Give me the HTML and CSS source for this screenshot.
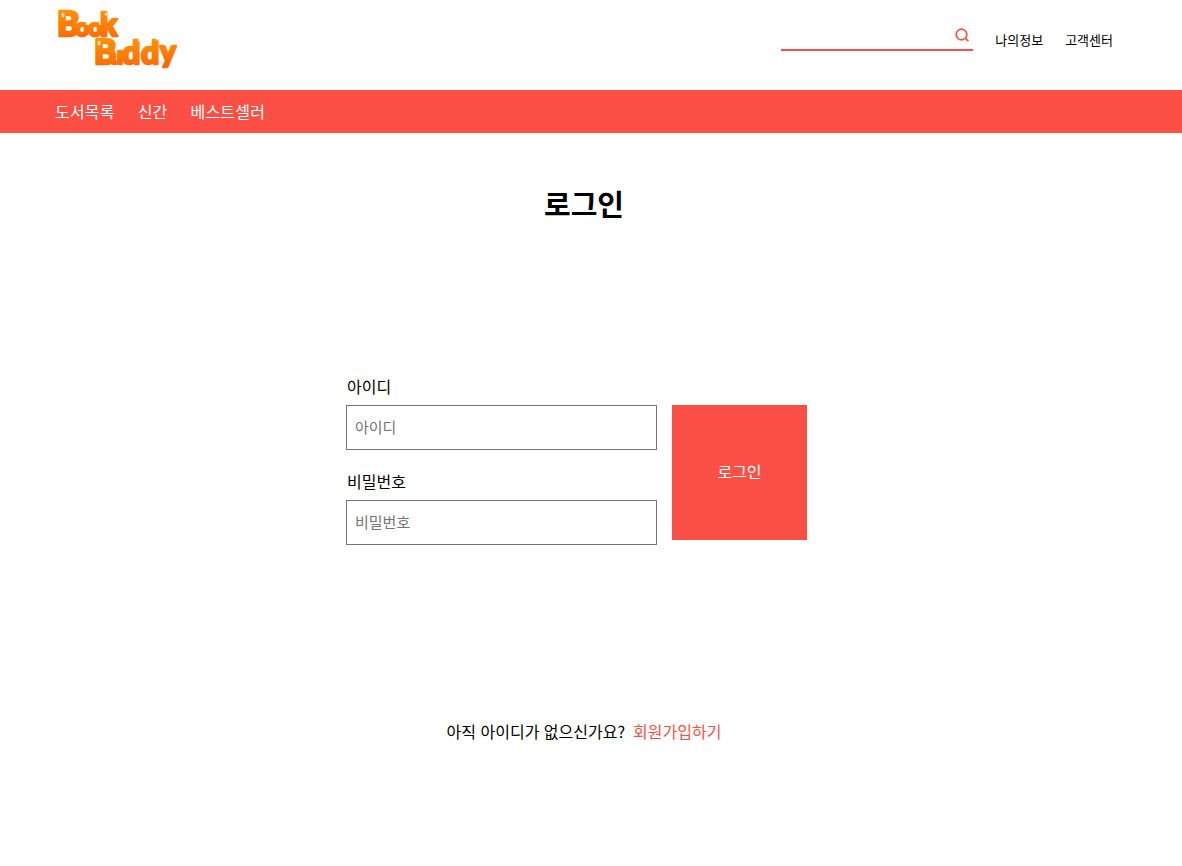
FILE: index.html
```html
<!DOCTYPE html>
<html lang="ko">
<head>
  <meta charset="UTF-8">
  <title>Book Buddy - 로그인</title>
  <link rel="stylesheet" href="styles.css">
</head>
<body>
  <header class="top">
    <a class="logo" href="#">
      <svg width="126" height="60" viewBox="0 0 126 60" xmlns="http://www.w3.org/2000/svg">
        <defs>
          <linearGradient id="logo-fill" x1="0" y1="0" x2="0" y2="1">
            <stop offset="0" stop-color="#ff9d0a"/>
            <stop offset="1" stop-color="#ff6400"/>
          </linearGradient>
        </defs>
        <g class="logo-text" fill="url(#logo-fill)" stroke="url(#logo-fill)">
          <text x="1" y="27" class="logo-cap">B</text>
          <text x="19" y="27">o</text>
          <text x="32" y="27">o</text>
          <text x="44" y="27" class="logo-tall">k</text>
          <text x="38" y="55" class="logo-cap">B</text>
          <text x="53" y="55">u</text>
          <text x="66" y="55" class="logo-tall">d</text>
          <text x="85" y="55" class="logo-tall">d</text>
          <text x="104" y="53" class="logo-tail">y</text>
        </g>
        <g fill="#fff" opacity=".75">
          <ellipse cx="7" cy="6" rx="1.5" ry="2.5"/>
          <ellipse cx="31" cy="15" rx="1.2" ry="1"/>
          <ellipse cx="44" cy="15" rx="1.2" ry="1"/>
          <ellipse cx="50" cy="5" rx="1.2" ry="1.6"/>
          <ellipse cx="43" cy="34" rx="1.5" ry="2.5"/>
          <ellipse cx="83" cy="31" rx="1.2" ry="1.6"/>
          <ellipse cx="101" cy="30" rx="1.2" ry="1.6"/>
          <ellipse cx="120" cy="33" rx="1.2" ry="1.6"/>
        </g>
      </svg>
    </a>
    <div class="top-right">
      <form class="search">
        <input class="search-input" type="text">
        <svg class="search-icon" width="16" height="16" viewBox="0 0 16 16" fill="none" stroke="#fb4f45" stroke-width="1.7">
          <circle cx="7.5" cy="6.5" r="5.3"/>
          <path d="M11.4 10.4l3 2.8"/>
        </svg>
      </form>
      <a class="top-link" href="#">나의정보</a>
      <a class="top-link" href="#">고객센터</a>
    </div>
  </header>

  <nav class="menu">
    <a href="#">도서목록</a>
    <a href="#">신간</a>
    <a href="#">베스트셀러</a>
  </nav>

  <main class="content">
    <h1 class="title">로그인</h1>

    <form class="login">
      <div class="fields">
        <label class="field-label" for="user-id">아이디</label>
        <input class="field-input" id="user-id" type="text" placeholder="아이디">
        <label class="field-label field-label-next" for="user-pw">비밀번호</label>
        <input class="field-input" id="user-pw" type="password" placeholder="비밀번호">
      </div>
      <button class="login-btn" type="button">로그인</button>
    </form>

    <p class="join">아직 아이디가 없으신가요?<a href="#">회원가입하기</a></p>
  </main>
</body>
</html>
```

FILE: styles.css
```css
body {
  margin: 0;
  padding: 0;
  font-family: "Noto Sans CJK KR", "Noto Sans", sans-serif;
  font-size: 16px;
  background-color: #fff;
  color: #000;
}
a {
  color: inherit;
  text-decoration: none;
}

.top {
  height: 90px;
  padding: 0 69px 0 56px;
  display: flex;
  justify-content: space-between;
  align-items: flex-start;
}
.logo {
  display: block;
  margin-top: 9px;
}
.logo-text {
  font-family: "Lato", sans-serif;
  font-weight: 900;
  font-size: 25px;
  stroke-width: 2.4px;
  stroke-linejoin: round;
}
.logo-cap {
  font-size: 34px;
}
.logo-tall {
  font-size: 32px;
}
.logo-tail {
  font-size: 30px;
}
.top-right {
  display: flex;
  align-items: center;
  height: 79px;
  gap: 22px;
}
.search {
  width: 192px;
  height: 24px;
  border-bottom: 2px solid #fb4f45;
  position: relative;
  align-self: flex-end;
  margin-bottom: 28px;
}
.search-input {
  width: 100%;
  height: 100%;
  padding: 0;
  border: 0;
  outline: 0;
  background: none;
}
.search-icon {
  position: absolute;
  right: 3px;
  top: 3px;
}
.top-link {
  font-size: 13px;
  line-height: 18px;
}

.menu {
  height: 43px;
  padding: 0 55px 2px;
  box-sizing: border-box;
  display: flex;
  align-items: center;
  gap: 23px;
  background-color: #fb4f45;
  color: #fff;
  letter-spacing: .2px;
}

.content {
  padding: 50px 69px 0 55px;
}
.title {
  margin: 0;
  font-size: 29px;
  line-height: 40px;
  font-weight: 700;
  text-align: center;
}

.login {
  margin-top: 152px;
  display: flex;
  justify-content: center;
  gap: 15px;
}
.fields {
  width: 311px;
}
.field-label {
  display: block;
  line-height: 22px;
  margin-bottom: 8px;
  padding-left: 1px;
}
.field-label-next {
  margin-top: 20px;
}
.field-input {
  display: block;
  width: 100%;
  height: 45px;
  box-sizing: border-box;
  padding: 0 8px 3px;
  border: 1px solid #767676;
  border-radius: 0;
  outline: 0;
  font-family: inherit;
  font-size: 15px;
}
.field-input::placeholder {
  color: #757575;
}
.login-btn {
  width: 135px;
  height: 135px;
  margin: 30px 15px 0 0;
  padding: 0 0 3px;
  border: 0;
  background-color: #fb4f45;
  color: #fff;
  font-family: inherit;
  font-size: 16px;
}

.join {
  margin: 174px 0 0;
  line-height: 24px;
  text-align: center;
}
.join a {
  margin-left: 8px;
  color: #fb4f45;
}
```
